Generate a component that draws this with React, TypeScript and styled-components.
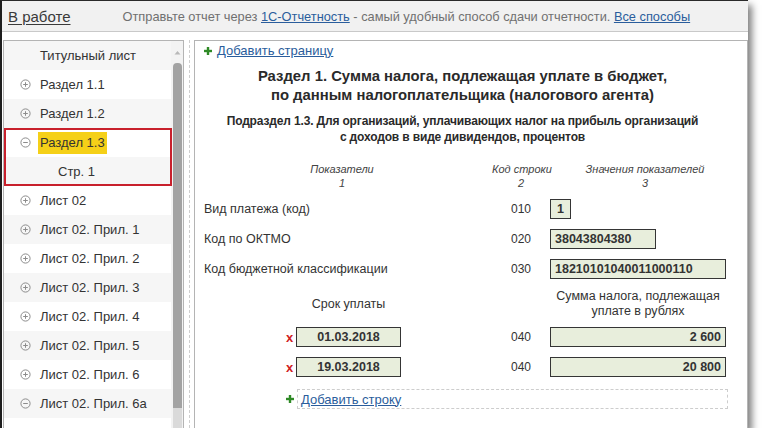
import React from "react";
import styled, { createGlobalStyle } from "styled-components";

const Global = createGlobalStyle`
  html, body { margin: 0; padding: 0; background: #ffffff; }
  body { font-family: "Liberation Sans", Arial, sans-serif; color: #333; }
  * { box-sizing: border-box; }
`;

const Window = styled.div`
  width: 748px;
  height: 428px;
  border-left: 2px solid #1e1e1e;
  border-top: 1px solid #2a2a2a;
  display: flex;
  flex-direction: column;
  box-shadow: 4px 5px 7px rgba(0, 0, 0, 0.5);
  background: #fff;
  overflow: hidden;
`;

const TopBar = styled.div`
  height: 31px;
  flex: none;
  background: #f1f1f1;
  border-bottom: 1px solid #c9c9c9;
  display: flex;
  align-items: center;
  padding-left: 6px;
  white-space: nowrap;
`;

const Status = styled.span`
  font-size: 15px;
  color: #3a3a3a;
  text-decoration: underline;
  text-underline-offset: 2px;
`;

const Notice = styled.span`
  margin-left: 52px;
  font-size: 12.8px;
  color: #707070;
`;

const Link = styled.a`
  color: #2a5d9c;
  text-decoration: underline;
  cursor: pointer;
`;

const Body = styled.div`
  flex: 1;
  min-height: 0;
  display: flex;
  padding: 8px 0 0 1px;
`;

const LeftPanel = styled.div`
  width: 181px;
  flex: none;
  border: 1px solid #b4b4b4;
  border-bottom: none;
  display: flex;
  overflow: hidden;
`;

const TreeList = styled.div`
  flex: 1;
  display: flex;
  flex-direction: column;
`;

const Row = styled.div<{ $striped: boolean; $level: number }>`
  height: 29px;
  flex: none;
  display: flex;
  align-items: center;
  gap: 9px;
  padding-left: ${(p) => (p.$level ? 54 : 16)}px;
  background: ${(p) => (p.$striped ? "#f6f6f6" : "#ffffff")};
  font-size: 13px;
  color: #333;
  white-space: nowrap;
`;

const IconSlot = styled.span`
  width: 11px;
  height: 11px;
  display: flex;
  align-items: center;
  justify-content: center;
  flex: none;
`;

const Label = styled.span<{ $hl?: boolean }>`
  padding: 3px 2px 3px 2px;
  line-height: 16px;
  margin-left: -2px;
  background: ${(p) => (p.$hl ? "#f5d018" : "transparent")};
`;

const Selection = styled.div`
  position: relative;
  display: flex;
  flex-direction: column;
  &::after {
    content: "";
    position: absolute;
    left: 0;
    top: 0;
    bottom: 0;
    width: 164px;
    border: 2px solid #c8202c;
    pointer-events: none;
  }
`;

const Scrollbar = styled.div`
  width: 12px;
  flex: none;
  background: #f3f3f3;
  display: flex;
  flex-direction: column;
  align-items: center;
`;

const ScrollArrow = styled.div`
  height: 22px;
  flex: none;
  display: flex;
  align-items: center;
  justify-content: center;
`;

const Thumb = styled.div`
  width: 9px;
  height: 345px;
  flex: none;
  background: #a3a3a3;
  border-radius: 4px 4px 0 0;
`;

const TrackRest = styled.div`
  width: 9px;
  flex: 1;
  background: #dadada;
`;

const Splitter = styled.div`
  width: 10px;
  flex: none;
  display: flex;
  justify-content: center;
  &::before {
    content: "";
    width: 0;
    border-left: 1px dashed #cfcfcf;
  }
`;

const RightPanel = styled.div`
  width: 554px;
  flex: none;
  border: 1px solid #b4b4b4;
  border-bottom: none;
  padding: 0 16px 0 9px;
  display: flex;
  flex-direction: column;
  overflow: hidden;
`;

const AddLine = styled.div`
  height: 19px;
  display: flex;
  align-items: center;
  gap: 5px;
  font-size: 13px;
`;

const Title = styled.div`
  margin: 7px 10px 0 0;
  text-align: center;
  font-weight: bold;
  font-size: 14.85px;
  line-height: 19px;
  color: #2a2a2a;
  white-space: nowrap;
`;

const Subtitle = styled.div`
  margin: 8px 10px 0 0;
  text-align: center;
  font-weight: bold;
  font-size: 12px;
  letter-spacing: -0.15px;
  line-height: 16px;
  color: #2a2a2a;
  white-space: nowrap;
`;

const Grid = styled.div<{ $top: number }>`
  margin-top: ${(p) => p.$top}px;
  display: grid;
  grid-template-columns: 288px 58px 1fr;
  align-items: center;
`;

const ColHead = styled.div<{ $w?: number }>`
  font-style: italic;
  font-size: 11px;
  line-height: 14px;
  color: #444;
  text-align: center;
  white-space: nowrap;
  width: ${(p) => (p.$w ? `${p.$w}px` : "auto")};
`;

const RowLabel = styled.div`
  height: 30px;
  display: flex;
  align-items: center;
  font-size: 12.5px;
  color: #333;
`;

const Code = styled.div`
  height: 30px;
  display: flex;
  align-items: center;
  justify-content: center;
  font-size: 12px;
  color: #333;
`;

const Field = styled.div<{ $w: number; $align: "left" | "center" | "right" }>`
  width: ${(p) => p.$w}px;
  height: 20px;
  border: 1px solid #353535;
  background: #e8eedc;
  font-weight: bold;
  font-size: 12.5px;
  color: #333;
  display: flex;
  align-items: center;
  padding: 0 4px;
  justify-content: ${(p) =>
    p.$align === "left" ? "flex-start" : p.$align === "right" ? "flex-end" : "center"};
`;

const SubHead = styled.div<{ $w: number; $pl?: number }>`
  width: ${(p) => p.$w + (p.$pl || 0)}px;
  padding-left: ${(p) => p.$pl || 0}px;
  text-align: center;
  font-size: 12.5px;
  line-height: 15px;
  color: #333;
  white-space: nowrap;
`;

const FieldCell = styled.div<{ $pl?: number }>`
  height: 30px;
  display: flex;
  align-items: center;
  gap: 3px;
  padding-left: ${(p) => p.$pl || 0}px;
`;

const Remove = styled.span`
  width: 7px;
  color: #d0201c;
  font-weight: bold;
  font-size: 13px;
  line-height: 13px;
  text-align: center;
`;

const AddRowLine = styled.div`
  margin-top: 7px;
  margin-left: 82px;
  display: flex;
  align-items: center;
  gap: 3px;
`;

const DashedBox = styled.div`
  width: 431px;
  height: 20px;
  border: 1px dashed #cdcdcd;
  display: flex;
  align-items: center;
  padding-left: 3px;
  font-size: 13px;
`;

const Expander = ({ open }: { open: boolean }) => (
  <svg width="11" height="11" viewBox="0 0 11 11">
    <circle cx="5.5" cy="5.5" r="4.6" fill="none" stroke="#8c8c8c" strokeWidth="1" />
    <line x1="3.2" y1="5.5" x2="7.8" y2="5.5" stroke="#8c8c8c" strokeWidth="1" />
    {!open && <line x1="5.5" y1="3.2" x2="5.5" y2="7.8" stroke="#8c8c8c" strokeWidth="1" />}
  </svg>
);

const GreenPlus = () => (
  <svg width="8" height="8" viewBox="0 0 8 8">
    <rect x="2.8" y="0" width="2.4" height="8" fill="#2f8a26" />
    <rect x="0" y="2.8" width="8" height="2.4" fill="#2f8a26" />
  </svg>
);

const UpArrow = () => (
  <svg width="7" height="5" viewBox="0 0 7 5">
    <path d="M0.5 4.5 L3.5 1 L6.5 4.5 Z" fill="#b8b8b8" />
  </svg>
);

type Node = { label: string; icon?: "plus" | "minus"; level?: number; hl?: boolean };

const before: Node[] = [
  { label: "Титульный лист" },
  { label: "Раздел 1.1", icon: "plus" },
  { label: "Раздел 1.2", icon: "plus" },
];
const selected: Node[] = [
  { label: "Раздел 1.3", icon: "minus", hl: true },
  { label: "Стр. 1", level: 1 },
];
const after: Node[] = [
  { label: "Лист 02", icon: "plus" },
  { label: "Лист 02. Прил. 1", icon: "plus" },
  { label: "Лист 02. Прил. 2", icon: "plus" },
  { label: "Лист 02. Прил. 3", icon: "plus" },
  { label: "Лист 02. Прил. 4", icon: "plus" },
  { label: "Лист 02. Прил. 5", icon: "plus" },
  { label: "Лист 02. Прил. 6", icon: "plus" },
  { label: "Лист 02. Прил. 6а", icon: "minus" },
  { label: "Стр. 1", level: 1 },
];

const TreeRow = ({ node, index }: { node: Node; index: number }) => (
  <Row $striped={index % 2 === 0} $level={node.level || 0}>
    {!node.level && (
      <IconSlot>{node.icon && <Expander open={node.icon === "minus"} />}</IconSlot>
    )}
    <Label $hl={node.hl}>{node.label}</Label>
  </Row>
);

const rows = [
  { label: "Вид платежа (код)", code: "010", value: "1", w: 21, align: "center" as const },
  { label: "Код по ОКТМО", code: "020", value: "38043804380", w: 106, align: "left" as const },
  { label: "Код бюджетной классификации", code: "030", value: "18210101040011000110", w: 176, align: "left" as const },
];

const payments = [
  { date: "01.03.2018", code: "040", sum: "2 600" },
  { date: "19.03.2018", code: "040", sum: "20 800" },
];

export default function App() {
  return (
    <>
      <Global />
      <Window>
        <TopBar>
          <Status>В работе</Status>
          <Notice>
            Отправьте отчет через <Link>1С-Отчетность</Link> - самый удобный способ сдачи
            отчетности. <Link>Все способы</Link>
          </Notice>
        </TopBar>
        <Body>
          <LeftPanel>
            <TreeList>
              {before.map((n, i) => (
                <TreeRow key={"b" + i} node={n} index={i} />
              ))}
              <Selection>
                {selected.map((n, i) => (
                  <TreeRow key={"s" + i} node={n} index={i + 3} />
                ))}
              </Selection>
              {after.map((n, i) => (
                <TreeRow key={"a" + i} node={n} index={i + 5} />
              ))}
            </TreeList>
            <Scrollbar>
              <ScrollArrow>
                <UpArrow />
              </ScrollArrow>
              <Thumb />
              <TrackRest />
            </Scrollbar>
          </LeftPanel>
          <Splitter />
          <RightPanel>
            <AddLine>
              <GreenPlus />
              <Link>Добавить страницу</Link>
            </AddLine>
            <Title>
              Раздел 1. Сумма налога, подлежащая уплате в бюджет,
              <br />
              по данным налогоплательщика (налогового агента)
            </Title>
            <Subtitle>
              Подраздел 1.3. Для организаций, уплачивающих налог на прибыль организаций
              <br />с доходов в виде дивидендов, процентов
            </Subtitle>
            <Grid $top={17}>
              <ColHead $w={276}>
                Показатели
                <br />1
              </ColHead>
              <ColHead>
                Код строки
                <br />2
              </ColHead>
              <ColHead $w={190}>
                Значения показателей
                <br />3
              </ColHead>
            </Grid>
            <Grid $top={4}>
              {rows.map((r) => (
                <React.Fragment key={r.code}>
                  <RowLabel>{r.label}</RowLabel>
                  <Code>{r.code}</Code>
                  <FieldCell>
                    <Field $w={r.w} $align={r.align}>
                      {r.value}
                    </Field>
                  </FieldCell>
                </React.Fragment>
              ))}
            </Grid>
            <Grid $top={5}>
              <SubHead $w={105} $pl={92}>
                Срок уплаты
              </SubHead>
              <div />
              <SubHead $w={176}>
                Сумма налога, подлежащая
                <br />
                уплате в рублях
              </SubHead>
            </Grid>
            <Grid $top={3}>
              {payments.map((p) => (
                <React.Fragment key={p.date}>
                  <FieldCell $pl={82}>
                    <Remove>x</Remove>
                    <Field $w={105} $align="center">
                      {p.date}
                    </Field>
                  </FieldCell>
                  <Code>{p.code}</Code>
                  <FieldCell>
                    <Field $w={176} $align="right">
                      {p.sum}
                    </Field>
                  </FieldCell>
                </React.Fragment>
              ))}
            </Grid>
            <AddRowLine>
              <GreenPlus />
              <DashedBox>
                <Link>Добавить строку</Link>
              </DashedBox>
            </AddRowLine>
          </RightPanel>
        </Body>
      </Window>
    </>
  );
}
